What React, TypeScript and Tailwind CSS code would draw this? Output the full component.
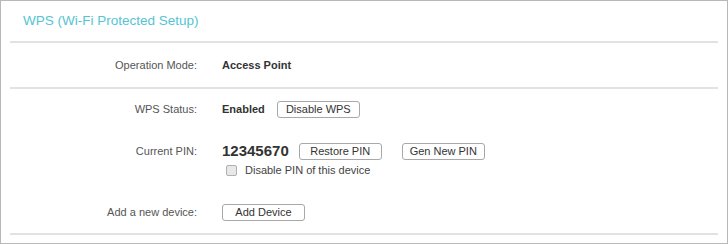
import React from "react";

const Btn = ({ children, w }: { children: React.ReactNode; w: string }) => (
  <button
    className={`h-[17px] ${w} border border-[#a8a8a8] rounded-[3px] bg-white text-[11px] leading-[15px] text-[#333] flex items-center justify-center`}
  >
    {children}
  </button>
);

export default function App() {
  return (
    <div
      className="w-[728px] h-[244px] border border-[#b8b8b8] bg-white flex flex-col"
      style={{ fontFamily: '"Liberation Sans", Arial, sans-serif' }}
    >
      <div className="h-[40px] pl-[22px] flex items-center">
        <span className="text-[13.5px] text-[#55c4d4]">WPS (Wi-Fi Protected Setup)</span>
      </div>
      <div className="mx-[9px] h-[2px] bg-[#e2e2e2]" />
      <div className="h-[44px] flex items-center">
        <div className="w-[196px] text-right text-[11px] text-[#555]">Operation Mode:</div>
        <div className="ml-[25px] text-[11px] font-bold text-[#333]">Access Point</div>
      </div>
      <div className="mx-[9px] h-[2px] bg-[#e2e2e2]" />
      <div className="pt-[11px] pb-[12px] flex flex-col">
        <div className="h-[18px] flex items-center">
          <div className="w-[196px] text-right text-[11px] text-[#555]">WPS Status:</div>
          <div className="ml-[25px] flex items-center">
            <span className="text-[11px] font-bold text-[#333]">Enabled</span>
            <div className="ml-[12px]">
              <Btn w="w-[83px]">Disable WPS</Btn>
            </div>
          </div>
        </div>
        <div className="mt-[24px] h-[18px] flex items-center">
          <div className="w-[196px] text-right text-[11px] text-[#555]">Current PIN:</div>
          <div className="ml-[25px] flex items-center">
            <span className="text-[15px] font-bold text-[#333]">12345670</span>
            <div className="ml-[10px]">
              <Btn w="w-[83px]">Restore PIN</Btn>
            </div>
            <div className="ml-[20px]">
              <Btn w="w-[83px]">Gen New PIN</Btn>
            </div>
          </div>
        </div>
        <div className="mt-[3px] h-[14px] flex items-center pl-[225px]">
          <span className="w-[11px] h-[11px] border border-[#b0b0b0] rounded-[2px] bg-[#e8e8e8]" />
          <span className="ml-[8px] text-[11px] text-[#444]">Disable PIN of this device</span>
        </div>
        <div className="mt-[26px] h-[18px] flex items-center">
          <div className="w-[196px] text-right text-[11px] text-[#555]">Add a new device:</div>
          <div className="ml-[25px]">
            <Btn w="w-[83px]">Add Device</Btn>
          </div>
        </div>
      </div>
      <div className="mx-[9px] h-[2px] bg-[#e2e2e2]" />
    </div>
  );
}
